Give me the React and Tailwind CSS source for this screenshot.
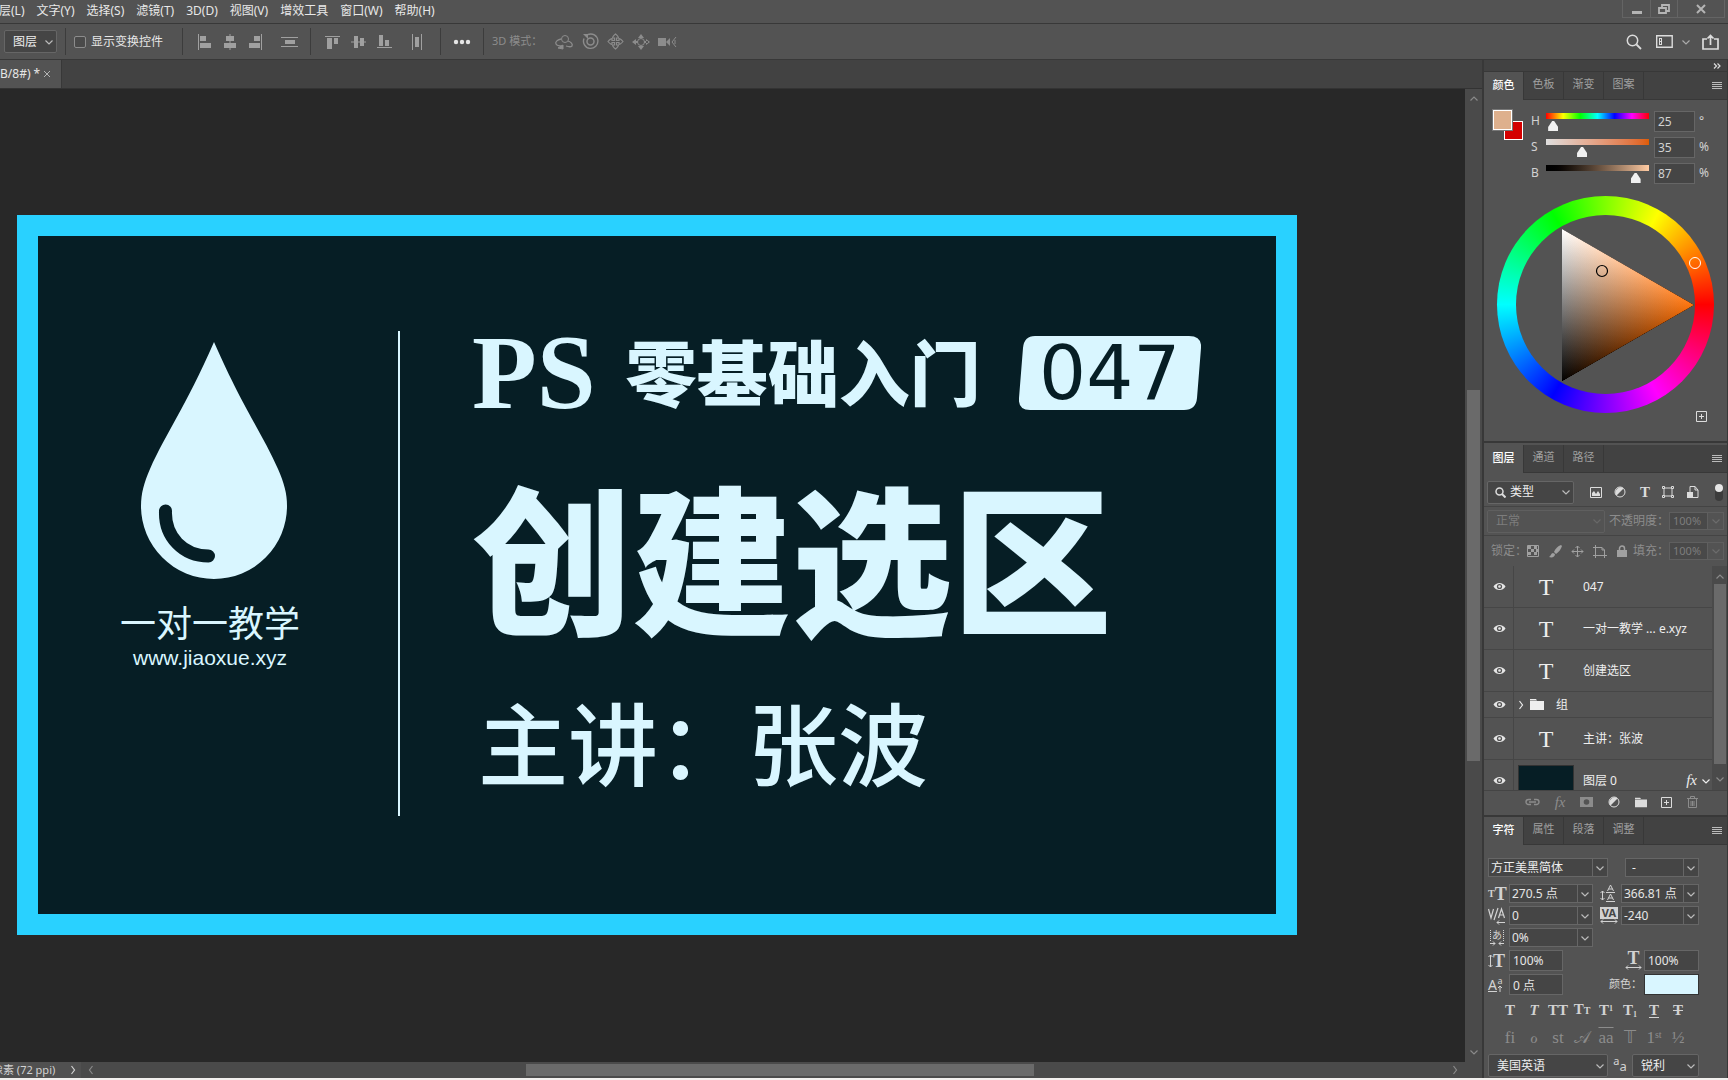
import React, { useState } from 'react';

const menus = ['图层(L)', '文字(Y)', '选择(S)', '滤镜(T)', '3D(D)', '视图(V)', '增效工具', '窗口(W)', '帮助(H)'];

const layers = [
  { id: 1, kind: 'text', name: '047' },
  { id: 2, kind: 'text', name: '一对一教学 ... e.xyz' },
  { id: 3, kind: 'text', name: '创建选区' },
  { id: 4, kind: 'group', name: '组' },
  { id: 5, kind: 'text', name: '主讲：张波' },
  { id: 6, kind: 'pixel', name: '图层 0' },
];

function Icon({ w = 16, h = 16, className = '', children }) {
  return (
    <svg
      width={w}
      height={h}
      viewBox={`0 0 ${w} ${h}`}
      fill="none"
      stroke="currentColor"
      className={`block shrink-0 ${className}`}
      aria-hidden="true"
    >
      {children}
    </svg>
  );
}

function Chevron({ dir = 'down', className = '' }) {
  const paths = {
    down: 'M1.5 3.5L5 7l3.5-3.5',
    up: 'M1.5 6.5L5 3l3.5 3.5',
    left: 'M6.5 1l-3 4 3 4',
    right: 'M3.5 1l3 4-3 4',
  };
  return (
    <Icon w={10} h={10} className={className}>
      <path d={paths[dir]} strokeWidth="1.2" />
    </Icon>
  );
}

function IconButton({ label, className = '', children }) {
  return (
    <button type="button" aria-label={label} title={label} className={`flex shrink-0 items-center justify-center ${className}`}>
      {children}
    </button>
  );
}

function Select({ label, value, className = '', inner = '', split = false, dim = false }) {
  return (
    <div className={`relative flex shrink-0 border ${dim ? 'border-[#5f5f5f] text-[#7d7d7d]' : 'border-[#666] bg-[#454545] text-[#eee]'} ${className}`}>
      <select aria-label={label} className={`w-full appearance-none bg-transparent outline-none ${inner}`}>
        <option>{value}</option>
      </select>
      <span className={`pointer-events-none absolute inset-y-0 right-0 flex w-[15px] items-center justify-center ${split ? 'border-l border-[#666]' : ''} ${dim ? 'text-[#686868]' : 'text-[#bbb]'}`}>
        <Chevron />
      </span>
    </div>
  );
}

function ComboField({ label, value, className = '' }) {
  return (
    <div className={`flex h-[19px] shrink-0 border border-[#666] bg-[#454545] ${className}`}>
      <input aria-label={label} defaultValue={value} className="w-full min-w-0 bg-transparent pl-[2px] text-xs text-[#e6e6e6] outline-none" />
      <button type="button" aria-label={`${label}选项`} className="flex w-[15px] shrink-0 items-center justify-center border-l border-[#666] text-[#bbb]">
        <Chevron />
      </button>
    </div>
  );
}

function PanelTabs({ tabs }) {
  const [active, setActive] = useState(tabs[0]);
  return (
    <div className="flex h-[28px] shrink-0 bg-[#424242] text-[11px]">
      {tabs.map((tab) => (
        <button
          key={tab}
          type="button"
          onClick={() => setActive(tab)}
          className={`w-[40px] border-r border-[#383838] pb-[2px] ${active === tab ? 'bg-[#535353] font-medium text-white' : 'border-b text-[#a0a0a0]'}`}
        >
          {tab}
        </button>
      ))}
      <div className="flex flex-1 items-center justify-end border-b border-[#383838] pr-[5px] text-[#bbb]">
        <IconButton label="面板菜单">
          <Icon w={10} h={8}>
            <path d="M0 .5h10M0 2.5h10M0 4.5h10M0 6.5h10" />
          </Icon>
        </IconButton>
      </div>
    </div>
  );
}

/* ---------- top bars ---------- */

function MenuBar() {
  return (
    <header className="flex h-[24px] shrink-0 justify-between overflow-hidden border-b border-[#383838] bg-[#535353] text-[#e8e8e8]">
      <nav className="-ml-[13px] flex items-center gap-[12px] pb-[2px] text-xs">
        {menus.map((m) => (
          <button key={m} type="button" className="whitespace-nowrap">
            {m}
          </button>
        ))}
      </nav>
      <div className="mr-[3px] flex h-[18px] border border-t-0 border-[#646464] text-[#b4b4b4]">
        <IconButton label="最小化" className="w-[28px] border-r border-[#646464]">
          <Icon w={10} h={12}>
            <path d="M0 9.500h10" strokeWidth="3" />
          </Icon>
        </IconButton>
        <IconButton label="还原" className="w-[27px] border-r border-[#646464]">
          <Icon w={12} h={12}>
            <path d="M4 4V2h7v6H8M1 5h7v5H1z" strokeWidth="1.8" />
          </Icon>
        </IconButton>
        <IconButton label="关闭" className="w-[46px]">
          <Icon w={10} h={10}>
            <path d="M1 1l8 8M9 1L1 9" strokeWidth="2" />
          </Icon>
        </IconButton>
      </div>
    </header>
  );
}

function Rule() {
  return <div className="h-[27px] w-px shrink-0 bg-[#3c3c3c]" />;
}

function OptionsBar() {
  return (
    <div className="flex h-[36px] shrink-0 items-center border-b border-[#383838] bg-[#535353] text-[#a0a0a0]">
      <Select label="自动选择" value="图层" className="ml-[4px] h-[23px] w-[53px] rounded-[2px] text-xs" inner="pl-[8px]" />
      <div className="w-[8px]" />
      <Rule />
      <label className="ml-[8px] flex w-[108px] items-center gap-[5px] text-xs text-[#e6e6e6]">
        <input type="checkbox" className="h-[12px] w-[12px] appearance-none rounded-[2px] border border-[#8c8c8c] bg-[#4a4a4a]" />
        显示变换控件
      </label>
      <Rule />
      <div className="ml-[14px] mr-[12px] flex items-center">
        <IconButton label="左对齐" className="mr-[11px]">
          <Icon w={15} h={16}>
            <path d="M1.5 0v16" />
            <path d="M3 2h6v5H3zM3 9h11v5H3z" fill="currentColor" stroke="none" />
          </Icon>
        </IconButton>
        <IconButton label="水平居中对齐" className="mr-[11px]">
          <Icon w={14} h={16}>
            <path d="M7 0v16" />
            <path d="M3 2h8v5H3zM1 9h12v5H1z" fill="currentColor" stroke="none" />
          </Icon>
        </IconButton>
        <IconButton label="右对齐" className="mr-[18px]">
          <Icon w={15} h={16}>
            <path d="M13.5 0v16" />
            <path d="M6 2h6v5H6zM1 9h11v5H1z" fill="currentColor" stroke="none" />
          </Icon>
        </IconButton>
        <IconButton label="垂直分布">
          <Icon w={17} h={16}>
            <path d="M0 3.500h17M0 12.500h17" />
            <path d="M4 6h10v4H4z" fill="currentColor" stroke="none" />
          </Icon>
        </IconButton>
      </div>
      <Rule />
      <div className="ml-[14px] mr-[16px] flex items-center">
        <IconButton label="顶对齐" className="mr-[11px]">
          <Icon w={15} h={16}>
            <path d="M0 2.500h15" />
            <path d="M2 4h5v11H2zM9 4h4v6H9z" fill="currentColor" stroke="none" />
          </Icon>
        </IconButton>
        <IconButton label="垂直居中对齐" className="mr-[11px]">
          <Icon w={15} h={16}>
            <path d="M0 8h15" />
            <path d="M3 2h4v12H3zM9 4h4v8H9z" fill="currentColor" stroke="none" />
          </Icon>
        </IconButton>
        <IconButton label="底对齐" className="mr-[19px]">
          <Icon w={15} h={16}>
            <path d="M0 13.500h15" />
            <path d="M2 1h4v11H2zM8 6h4v6H8z" fill="currentColor" stroke="none" />
          </Icon>
        </IconButton>
        <IconButton label="水平分布">
          <Icon w={13} h={16}>
            <path d="M1.5 0v16M10.5 0v16" />
            <path d="M4 3h4v10H4z" fill="currentColor" stroke="none" />
          </Icon>
        </IconButton>
      </div>
      <Rule />
      <IconButton label="更多选项" className="ml-[12px] mr-[12px] text-[#e6e6e6]">
        <Icon w={18} h={6}>
          <g fill="currentColor" stroke="none">
            <circle cx="3" cy="3" r="2.2" />
            <circle cx="9" cy="3" r="2.2" />
            <circle cx="15" cy="3" r="2.2" />
          </g>
        </Icon>
      </IconButton>
      <Rule />
      <span className="ml-[8px] w-[62px] whitespace-nowrap text-[11px] text-[#8c8c8c]">3D 模式：</span>
      <div className="flex items-center gap-[8px] text-[#8c8c8c]">
        <IconButton label="环绕移动 3D 相机">
          <Icon w={20} h={16}>
            <circle cx="11" cy="5" r="3.5" />
            <path d="M7 5C3 6 1 8 2 10s3 2 6 2M14 7c3 1 5 3 4 5-1 1-3 1-6 0" strokeWidth="1.3" />
            <path d="M4 14l5-3v4z" fill="currentColor" strokeWidth="1" />
          </Icon>
        </IconButton>
        <IconButton label="滚动 3D 相机">
          <Icon w={17} h={17}>
            <circle cx="8.5" cy="8.5" r="3.5" strokeWidth="1.5" />
            <path d="M6 1.500a7.200 7.200 0 1 1-4 4" strokeWidth="1.400" />
            <path d="M1 1h5v5z" fill="currentColor" stroke="none" />
          </Icon>
        </IconButton>
        <IconButton label="平移 3D 相机">
          <Icon w={17} h={17}>
            <path d="M7.500 7.500V5H6c-1 0 0-2 2.500-4C11 3 12 5 11 5H9.500v2.500H12V6c0-1 2 0 4 2.500-2 2.500-4 3.500-4 2.500V9.500H9.500V12H11c1 0 0 2-2.500 4C6 14 5 12 6 12h1.500V9.500H5V11c0 1-2 0-4-2.500C3 6 5 5 5 6v1.500z" strokeWidth="1.2" />
          </Icon>
        </IconButton>
        <IconButton label="滑动 3D 相机">
          <Icon w={18} h={16}>
            <circle cx="9" cy="8" r="3.5" />
            <path d="M9 0l3 4H6zM9 16l3-4H6zM0 8l4-3v6zM18 8l-4-3v6zM2 7h4v2H2zM12 7h4v2h-4z" fill="currentColor" stroke="none" />
          </Icon>
        </IconButton>
        <IconButton label="变焦 3D 相机">
          <Icon w={19} h={14}>
            <path d="M0 3h8v8H0zM8 7l4-4v8z" fill="currentColor" stroke="none" />
            <path d="M18 2l-4 5 4 5M17 5v4" />
          </Icon>
        </IconButton>
      </div>
      <div className="ml-auto mr-[9px] flex items-center text-[#dcdcdc]">
        <IconButton label="搜索" className="mr-[14px]">
          <Icon w={16} h={16}>
            <circle cx="6.5" cy="6.5" r="5.2" strokeWidth="1.5" />
            <path d="M10.5 10.5L15 15" strokeWidth="1.8" />
          </Icon>
        </IconButton>
        <IconButton label="工作区" className="mr-[8px]">
          <Icon w={17} h={13}>
            <path d="M.7.7h15.500v11.600H.7z" strokeWidth="1.4" />
            <path d="M3.500 3v7M5.500 3v7M3 3.500h3M3 6.500h3M3 9.500h3" />
          </Icon>
        </IconButton>
        <Chevron className="mr-[11px] text-[#aaa]" />
        <IconButton label="共享">
          <Icon w={17} h={16}>
            <path d="M5 5H1v10h15V5h-4M8.500 11V1.500M5.500 4.500l3-3 3 3" strokeWidth="1.7" />
          </Icon>
        </IconButton>
      </div>
    </div>
  );
}

/* ---------- document ---------- */

function Artwork() {
  return (
    <div className="flex h-[720px] w-[1280px] shrink-0 border-[21px] border-[#29d1ff] bg-[#061e25] text-[#d9f6ff]">
      <div className="flex w-[360px] shrink-0 flex-col items-center pt-[106px] pr-[8px]">
        <svg width="146" height="238" viewBox="0 0 146 238" className="block" aria-hidden="true">
          <path d="M73 0C102 66 121 91 137 127c6 14 9 24 9 37a73 73 0 0 1-146 0c0-13 3-23 9-37C25 91 44 66 73 0z" fill="currentColor" />
          <path d="M24.500 169c-1 26 18 45 43 45" fill="none" stroke="#061e25" strokeWidth="13" strokeLinecap="round" />
        </svg>
        <p className="mt-[22px] pr-[8px] text-[36px] leading-[44px]">一对一教学</p>
        <p className="pr-[8px] font-['Liberation_Sans',sans-serif] text-[21px] leading-[24px]">www.jiaoxue.xyz</p>
      </div>
      <div className="mt-[95px] h-[485px] w-[2px] shrink-0 bg-[#d9f6ff]" />
      <div className="flex flex-col pt-[95px] pl-[72px]">
        <div className="flex h-[84px] items-center">
          <span className="mr-[30px] font-['Liberation_Serif',serif] text-[106px] leading-[84px] font-bold">PS</span>
          <span className="text-[71px] leading-[84px] font-black">零基础入门</span>
          <span className="relative ml-[38px] flex h-[74px] w-[182px] items-center justify-center">
            <svg className="absolute inset-0" width="182" height="74" viewBox="0 0 182 74" aria-hidden="true">
              <path d="M16 0h154q13 0 12 12l-4 50q-1 12-13 12H11Q-1 74 0 62L4 12Q5 0 16 0z" fill="currentColor" />
            </svg>
            <span className="relative font-['DejaVu_Sans',sans-serif] text-[74px] leading-[74px] text-[#061e25]">047</span>
          </span>
        </div>
        <h1 className="mt-[36px] text-[160px] leading-[220px] font-black">创建选区</h1>
        <h2 className="mt-[18px] pl-[6px] text-[90px] leading-[110px] font-medium">主讲：张波</h2>
      </div>
    </div>
  );
}

function Document() {
  return (
    <main className="flex min-w-0 flex-1 flex-col">
      <div className="flex h-[29px] shrink-0 border-b border-[#333] bg-[#424242]">
        <div className="flex w-[62px] items-center border-r border-[#383838] bg-[#535353] text-xs text-[#e6e6e6]">
          <span className="w-[43px] whitespace-nowrap">B/8#) *</span>
          <IconButton label="关闭文档" className="text-[#b4b4b4]">
            <Icon w={8} h={8}>
              <path d="M1 1l6 6M7 1L1 7" />
            </Icon>
          </IconButton>
        </div>
      </div>
      <div className="flex min-h-0 flex-1">
        <div className="min-w-0 flex-1 overflow-hidden bg-[#282828] pt-[126px] pl-[17px]">
          <Artwork />
        </div>
        <div className="flex w-[17px] shrink-0 flex-col items-center bg-[#4a4a4a] py-[5px] text-[#8a8a8a]">
          <Chevron dir="up" />
          <div className="mt-[286px] h-[371px] w-[13px] bg-[#6a6a6a]" />
          <Chevron className="mt-auto" />
        </div>
      </div>
      <footer className="flex h-[16px] shrink-0 items-center bg-[#4a4a4a] text-[11px] text-[#d2d2d2]">
        <div className="flex h-full w-[81px] items-center overflow-hidden bg-[#505050]">
          <span className="-ml-[8px] w-[76px] whitespace-nowrap">像素 (72 ppi)</span>
          <Chevron dir="right" />
        </div>
        <Chevron dir="left" className="ml-[5px] text-[#8a8a8a]" />
        <div className="flex h-full flex-1 items-center pl-[29%]">
          <div className="h-[12px] w-[55%] bg-[#6a6a6a]" />
        </div>
        <Chevron dir="right" className="mr-[22px] text-[#8a8a8a]" />
      </footer>
    </main>
  );
}

/* ---------- colour panel ---------- */

function Slider({ name, value, max, unit, track }) {
  const id = `slider-${name}`;
  return (
    <div className="flex h-[26px] items-center text-xs text-[#d2d2d2]">
      <label htmlFor={id} className="w-[15px]">
        {name}
      </label>
      <div className="mr-[5px] flex min-w-0 flex-1 flex-col pt-[2px]">
        <div className={`h-[6px] ${track}`} />
        <input
          id={id}
          type="range"
          max={max}
          defaultValue={value}
          className="-mx-[5px] mt-[2px] block h-[10px] appearance-none bg-transparent [&::-webkit-slider-thumb]:h-[10px] [&::-webkit-slider-thumb]:w-[10px] [&::-webkit-slider-thumb]:appearance-none [&::-webkit-slider-thumb]:bg-[#f0f0f0] [&::-webkit-slider-thumb]:[clip-path:polygon(40%_0,60%_0,100%_60%,100%_100%,0_100%,0_60%)]"
        />
      </div>
      <input aria-label={`${name} 值`} defaultValue={value} className="h-[21px] w-[41px] border border-[#666] bg-[#454545] pl-[3px] outline-none" />
      <span className="w-[32px] pl-[4px]">{unit}</span>
    </div>
  );
}

function ColorWheel() {
  return (
    <div className="relative mx-auto mt-[10px] h-[217px] w-[217px]">
      <div className="h-full w-full rounded-full bg-[conic-gradient(from_90deg,#f00,#f0f,#00f,#0ff,#0f0,#ff0,#f00)] p-[19px]">
        <div className="h-full w-full rounded-full bg-[#535353]">
          <svg className="block h-full w-full" viewBox="19 19 179 179" aria-hidden="true">
            <defs>
              <linearGradient id="hue" gradientUnits="userSpaceOnUse" x1="65" y1="0" x2="197" y2="0">
                <stop offset="0" stopColor="#000" />
                <stop offset="1" stopColor="#ff740c" />
              </linearGradient>
              <linearGradient id="tint" gradientUnits="userSpaceOnUse" x1="65" y1="33" x2="131" y2="147">
                <stop offset="0" stopColor="#fff" />
                <stop offset="1" stopColor="#000" />
              </linearGradient>
            </defs>
            <g className="isolate">
              <path d="M65 33l132 76L65 185z" fill="url(#hue)" />
              <path d="M65 33l132 76L65 185z" fill="url(#tint)" className="mix-blend-plus-lighter" />
            </g>
            <circle cx="105" cy="75" r="5.5" fill="none" stroke="#000" strokeWidth="1.2" />
          </svg>
        </div>
      </div>
      <span className="absolute top-[61px] left-[192px] h-[12px] w-[12px] rounded-full border border-white" />
    </div>
  );
}

function ColorPanel() {
  return (
    <section className="flex h-[371px] shrink-0 flex-col border-b-2 border-[#383838]">
      <PanelTabs tabs={['颜色', '色板', '渐变', '图案']} />
      <div className="flex pt-[8px] pl-[9px]">
        <div className="grid h-[32px] w-[38px] shrink-0 grid-cols-[11px_8px_11px] grid-rows-[11px_9px_10px] pt-[2px]">
          <button type="button" aria-label="背景色" className="col-span-2 col-start-2 row-span-2 row-start-2 border border-white bg-[#d40000]" />
          <button type="button" aria-label="前景色" className="col-span-2 col-start-1 row-span-2 row-start-1 border border-white bg-[#deb08d] outline outline-[#777]" />
        </div>
        <div className="min-w-0 flex-1">
          <Slider name="H" value={25} max={360} unit="°" track="bg-[linear-gradient(to_right,#f00,#ff0,#0f0,#0ff,#00f,#f0f,#f00)]" />
          <Slider name="S" value={35} max={100} unit="%" track="bg-linear-to-r from-[#dedede] to-[#de5c00]" />
          <Slider name="B" value={87} max={100} unit="%" track="bg-linear-to-r from-black to-[#ffcba3]" />
        </div>
      </div>
      <ColorWheel />
      <IconButton label="新建色板" className="-mt-[2px] mr-[20px] self-end text-[#dcdcdc]">
        <Icon w={11} h={11}>
          <path d="M.5.5h10v10H.5zM5.500 3v5M3 5.500h5" />
        </Icon>
      </IconButton>
    </section>
  );
}

/* ---------- layers panel ---------- */

function HalfCircle({ className = '' }) {
  return (
    <Icon w={12} h={12} className={className}>
      <circle cx="6" cy="6" r="5" />
      <path d="M9.500 2.500A5 5 0 0 0 2.500 9.500z" fill="currentColor" stroke="none" />
    </Icon>
  );
}

function Folder({ w = 14 }) {
  return (
    <svg width={w} height="11" viewBox="0 0 14 11" fill="currentColor" className="block shrink-0" aria-hidden="true">
      <path d="M0 0h6l1 1.500H0zM0 2h14v9H0z" />
    </svg>
  );
}

function PercentField({ label }) {
  return (
    <div className="flex h-[18px] w-[55px] border border-[#5f5f5f] text-[11px] text-[#7d7d7d]">
      <input aria-label={label} disabled defaultValue="100%" className="w-[37px] bg-[#494949] pl-[3px]" />
      <span className="flex w-[16px] items-center justify-center border-l border-[#5f5f5f] text-[#6c6c6c]">
        <Chevron />
      </span>
    </div>
  );
}

function LayerRow({ layer }) {
  const heights = { text: 'h-[42px]', group: 'h-[26px]', pixel: 'h-[42px]' };
  return (
    <li className={`flex shrink-0 items-stretch border-b border-[#464646] text-[#eee] ${heights[layer.kind]}`}>
      <IconButton label="显示图层" className="w-[30px] border-r border-[#464646] pl-[2px]">
        <Icon w={13} h={9}>
          <path d="M.5 4.500C3-.3 10-.3 12.500 4.500 10 9.300 3 9.300.5 4.500z" fill="#e6e6e6" stroke="none" />
          <circle cx="6.5" cy="4.5" r="2.6" fill="#535353" stroke="none" />
          <circle cx="6.5" cy="4.5" r="1.3" fill="#e6e6e6" stroke="none" />
        </Icon>
      </IconButton>
      {layer.kind === 'text' && (
        <span className="flex w-[69px] items-center justify-center pr-[5px] font-['Liberation_Serif',serif] text-[24px]">T</span>
      )}
      {layer.kind === 'group' && (
        <span className="flex w-[42px] items-center gap-[4px] pl-[2px]">
          <Chevron dir="right" />
          <Folder />
        </span>
      )}
      {layer.kind === 'pixel' && (
        <span className="flex w-[69px] items-center pl-[4px]">
          <span className="h-[31px] w-[56px] border border-[#333] bg-[#061e25]" />
        </span>
      )}
      <span className="flex items-center text-xs whitespace-nowrap">{layer.name}</span>
      {layer.kind === 'pixel' && (
        <span className="ml-auto flex items-center gap-[4px] pr-[1px]">
          <i className="font-['Liberation_Serif',serif] text-[15px]">fx</i>
          <Chevron />
        </span>
      )}
    </li>
  );
}

function LayersPanel() {
  return (
    <section className="mt-[2px] flex h-[372px] shrink-0 flex-col border-b-2 border-[#383838]">
      <PanelTabs tabs={['图层', '通道', '路径']} />
      <div className="flex h-[34px] shrink-0 items-center border-b border-[#444] pt-[5px] pl-[3px] text-[#dcdcdc]">
        <div className="relative">
          <Select label="筛选类型" value="类型" className="h-[23px] w-[87px] rounded-[2px] text-xs" inner="pl-[22px]" />
          <Icon w={11} h={11} className="pointer-events-none absolute top-[6px] left-[8px]">
            <circle cx="4.5" cy="4.5" r="3.5" strokeWidth="1.5" />
            <path d="M7 7l3.500 3.500" strokeWidth="2" />
          </Icon>
        </div>
        <IconButton label="像素图层滤镜" className="ml-[16px]">
          <Icon w={12} h={11}>
            <path d="M.5.5h11v10H.5z" />
            <path d="M2 9V6l2-2 2 3 2-3 2 3v2z" fill="currentColor" stroke="none" />
          </Icon>
        </IconButton>
        <IconButton label="调整图层滤镜" className="ml-[12px]">
          <HalfCircle />
        </IconButton>
        <IconButton label="文字图层滤镜" className="ml-[10px] w-[18px] font-['Liberation_Serif',serif] text-[15px] leading-4 font-bold">
          T
        </IconButton>
        <IconButton label="形状图层滤镜" className="ml-[8px]">
          <Icon w={12} h={12}>
            <path d="M2 2h8v8H2z" />
            <path d="M.5.5h2v2h-2zM9.500.5h2v2h-2zM.5 9.500h2v2h-2zM9.500 9.500h2v2h-2z" fill="#535353" />
          </Icon>
        </IconButton>
        <IconButton label="智能对象滤镜" className="ml-[13px]">
          <Icon w={12} h={12}>
            <path d="M3 6V.5h5L11 4v7.500H6M8 .5V4h3" />
            <path d="M0 6h6v6H0z" fill="currentColor" stroke="none" />
          </Icon>
        </IconButton>
        <button type="button" aria-label="打开图层滤镜" className="mr-[4px] ml-auto flex h-[17px] w-[8px] rounded-full bg-[#3c3c3c]">
          <span className="h-[8px] w-[8px] rounded-full bg-[#e6e6e6]" />
        </button>
      </div>
      <div className="flex h-[29px] shrink-0 items-center border-b border-[#444] pl-[3px] text-xs text-[#8c8c8c]">
        <Select dim label="混合模式" value="正常" className="h-[23px] w-[118px] rounded-[2px]" inner="pl-[8px]" />
        <span className="ml-auto whitespace-nowrap">不透明度：</span>
        <div className="mr-[3px]">
          <PercentField label="不透明度" />
        </div>
      </div>
      <div className="flex h-[30px] shrink-0 items-center pl-[7px] text-xs text-[#a0a0a0]">
        <span className="w-[36px] text-[#8c8c8c]">锁定：</span>
        <IconButton label="锁定透明像素">
          <Icon w={12} h={12}>
            <path d="M.5.5h11v11H.5z" />
            <path d="M1 1h3v3H1zM7 1h3v3H7zM4 4h3v3H4zM9 4h3v3H9zM1 7h3v3H1zM7 7h3v3H7z" fill="currentColor" stroke="none" />
          </Icon>
        </IconButton>
        <IconButton label="锁定图像像素" className="ml-[10px]">
          <Icon w={13} h={13}>
            <path d="M12 0C9 1 6 4 5 7l2 2c3-2 5-5 6-8zM4 8c-2 0-2 3-4 4 3 1 6 0 6-3z" fill="currentColor" stroke="none" />
          </Icon>
        </IconButton>
        <IconButton label="锁定位置" className="ml-[9px]">
          <Icon w={13} h={13}>
            <path d="M6.500 1v11M1 6.500h11M4.500 3l2-2 2 2M4.500 10l2 2 2-2M3 4.500l-2 2 2 2M10 4.500l2 2-2 2" />
          </Icon>
        </IconButton>
        <IconButton label="防止在画板内外自动嵌套" className="ml-[9px]">
          <Icon w={14} h={13}>
            <path d="M2.500 0v13M0 2.500h9M0 10.500h14M11.500 5v8M9 2.500l2.500 2.500H9z" />
          </Icon>
        </IconButton>
        <IconButton label="全部锁定" className="ml-[10px]">
          <Icon w={10} h={12}>
            <path d="M2.500 5V3.500a2.500 2.500 0 0 1 5 0V5" strokeWidth="1.5" />
            <path d="M0 5h10v7H0z" fill="currentColor" stroke="none" />
          </Icon>
        </IconButton>
        <span className="ml-auto whitespace-nowrap text-[#8c8c8c]">填充：</span>
        <div className="mr-[3px]">
          <PercentField label="填充" />
        </div>
      </div>
      <div className="flex min-h-0 flex-1 overflow-hidden">
        <ul className="flex min-w-0 flex-1 flex-col overflow-hidden">
          {layers.map((layer) => (
            <LayerRow key={layer.id} layer={layer} />
          ))}
        </ul>
        <div className="flex w-[15px] shrink-0 flex-col items-center bg-[#4a4a4a] py-[6px] text-[#8a8a8a]">
          <Chevron dir="up" />
          <div className="mt-[2px] h-[180px] w-[12px] bg-[#6a6a6a]" />
          <Chevron className="mt-auto" />
        </div>
      </div>
      <div className="flex h-[25px] shrink-0 items-center justify-between border-t border-[#444] pr-[29px] pb-[2px] pl-[41px] text-[#dcdcdc]">
        <IconButton label="链接图层" className="text-[#8c8c8c]">
          <Icon w={15} h={8}>
            <path d="M6 1.500H3.500a2.500 2.500 0 0 0 0 5H6M9 1.500h2.500a2.500 2.500 0 0 1 0 5H9M4 4h7" strokeWidth="1.4" />
          </Icon>
        </IconButton>
        <IconButton label="添加图层样式" className="font-['Liberation_Serif',serif] text-[15px] leading-4 text-[#8c8c8c] italic">
          fx
        </IconButton>
        <IconButton label="添加图层蒙版" className="text-[#8c8c8c]">
          <Icon w={13} h={10}>
            <path d="M0 0h13v10H0z" fill="currentColor" stroke="none" />
            <circle cx="6.5" cy="5" r="2.8" fill="#535353" stroke="none" />
          </Icon>
        </IconButton>
        <IconButton label="创建调整图层">
          <HalfCircle />
        </IconButton>
        <IconButton label="创建新组">
          <Folder w={12} />
        </IconButton>
        <IconButton label="创建新图层">
          <Icon w={11} h={11}>
            <path d="M.5.5h10v10H.5zM5.500 3v5M3 5.500h5" />
          </Icon>
        </IconButton>
        <IconButton label="删除图层" className="text-[#8c8c8c]">
          <Icon w={11} h={12}>
            <path d="M0 2.500h11M3.500 2V.5h4V2M1.500 3v8.500h8V3M4 5v5M5.500 5v5M7 5v5" />
          </Icon>
        </IconButton>
      </div>
    </section>
  );
}

/* ---------- character panel ---------- */

function CharIcon({ children }) {
  return <span className="flex w-[21px] shrink-0 items-center text-[#d2d2d2]">{children}</span>;
}

const styleButtons = [
  { label: '仿粗体', body: 'T', cls: 'font-black' },
  { label: '仿斜体', body: 'T', cls: 'italic' },
  { label: '全部大写字母', body: 'TT', cls: '' },
  { label: '小型大写字母', body: <>T<small className="text-[10px]">T</small></>, cls: '' },
  { label: '上标', body: <>T<sup className="text-[8px]">1</sup></>, cls: '' },
  { label: '下标', body: <>T<sub className="text-[8px]">1</sub></>, cls: '' },
  { label: '下划线', body: 'T', cls: 'underline underline-offset-2' },
  { label: '删除线', body: 'T', cls: 'line-through' },
];

const featureButtons = [
  { label: '标准连字', body: 'fi', cls: '' },
  { label: '上下文替代字', body: 'ℴ', cls: 'italic' },
  { label: '自由连字', body: 'st', cls: '' },
  { label: '花饰字', body: '𝒜', cls: '' },
  { label: '文体替代字', body: 'aa', cls: 'overline' },
  { label: '标题替代字', body: '𝕋', cls: 'italic' },
  { label: '序数字', body: <>1<sup className="text-[10px]">st</sup></>, cls: '' },
  { label: '分数字', body: '½', cls: '' },
];

function CharacterPanel() {
  return (
    <section className="flex min-h-0 flex-1 flex-col overflow-hidden">
      <PanelTabs tabs={['字符', '属性', '段落', '调整']} />
      <div className="flex flex-col pt-[13px] pr-[28px] pl-[4px] text-xs">
        <div className="flex justify-between">
          <Select split label="字体" value="方正美黑简体" className="h-[19px] w-[120px]" inner="pl-[2px]" />
          <Select split label="字体样式" value="-" className="h-[19px] w-[74px]" inner="pl-[6px]" />
        </div>
        <div className="mt-[7px] flex items-center">
          <CharIcon>
            <span className="font-['Liberation_Serif',serif] text-[10px] leading-4 font-bold">T</span>
            <span className="font-['Liberation_Serif',serif] text-[18px] leading-4 font-bold">T</span>
          </CharIcon>
          <ComboField label="字体大小" value="270.5 点" className="w-[84px]" />
          <span className="ml-auto">
            <CharIcon>
              <Icon w={15} h={17}>
                <path d="M2.500 6v9M.5 8l2-2 2 2M.5 13l2 2 2-2M6 7.500h9M6 16.500h9M7.500 6l3-6 3 6M8.500 4h4M7.500 15l3-6 3 6M8.500 13h4" />
              </Icon>
            </CharIcon>
          </span>
          <ComboField label="行距" value="366.81 点" className="w-[78px]" />
        </div>
        <div className="mt-[3px] flex items-center">
          <CharIcon>
            <Icon w={17} h={18}>
              <path d="M.5 2l2.500 9 2.500-9M10 1L6 13M10.500 11l3-9 3 9M11.500 8h4" strokeWidth="1.2" />
              <path d="M9 15.500h8M11 13.500l-2 2 2 2" />
            </Icon>
          </CharIcon>
          <ComboField label="字距微调" value="0" className="w-[84px]" />
          <span className="ml-auto">
            <CharIcon>
              <span className="flex w-[18px] flex-col">
                <span className="bg-[#d2d2d2] text-center text-[11px] leading-[12px] font-bold text-[#454545]">VA</span>
                <Icon w={18} h={5}>
                  <path d="M1 2.500h16M3 .5l-2 2 2 2M15 .5l2 2-2 2" />
                </Icon>
              </span>
            </CharIcon>
          </span>
          <ComboField label="字距调整" value="-240" className="w-[78px]" />
        </div>
        <div className="mt-[3px] flex items-center">
          <CharIcon>
            <span className="ml-[2px] flex w-[14px] flex-col items-center">
              <span className="border-x border-dotted border-[#d2d2d2] px-px text-[10px] leading-[11px]">あ</span>
              <Icon w={14} h={5}>
                <path d="M0 2.500h5M3 .5l2 2-2 2M14 2.500H9M11 .5l-2 2 2 2" />
              </Icon>
            </span>
          </CharIcon>
          <ComboField label="比例间距" value="0%" className="w-[84px]" />
        </div>
        <div className="mt-[3px] flex items-center">
          <CharIcon>
            <Icon w={5} h={14}>
              <path d="M2.500 1v12M.5 3l2-2 2 2M.5 11l2 2 2-2" />
            </Icon>
            <span className="font-['Liberation_Serif',serif] text-[18px] leading-4 font-bold">T</span>
          </CharIcon>
          <input aria-label="垂直缩放" defaultValue="100%" className="h-[21px] w-[54px] border border-[#666] bg-[#454545] pl-[3px] text-[#e6e6e6] outline-none" />
          <span className="mr-[2px] ml-auto flex w-[17px] flex-col items-center text-[#d2d2d2]">
            <span className="font-['Liberation_Serif',serif] text-[18px] leading-[13px] font-bold">T</span>
            <Icon w={17} h={5}>
              <path d="M1 2.500h15M3 .5l-2 2 2 2M14 .5l2 2-2 2" />
            </Icon>
          </span>
          <input aria-label="水平缩放" defaultValue="100%" className="h-[21px] w-[55px] border border-[#666] bg-[#454545] pl-[3px] text-[#e6e6e6] outline-none" />
        </div>
        <div className="mt-[3px] flex items-center">
          <CharIcon>
            <span className="text-[14px] leading-4 underline">A</span>
            <span className="flex flex-col items-center">
              <span className="text-[9px] leading-[8px]">a</span>
              <Icon w={6} h={7}>
                <path d="M3 7V1M1 3l2-2 2 2" />
              </Icon>
            </span>
          </CharIcon>
          <input aria-label="基线偏移" defaultValue="0 点" className="h-[21px] w-[54px] border border-[#666] bg-[#454545] pl-[3px] text-[#e6e6e6] outline-none" />
          <span className="ml-auto w-[35px] whitespace-nowrap text-[11px] text-[#d2d2d2]">颜色：</span>
          <button type="button" aria-label="文本颜色" className="h-[21px] w-[55px] border border-[#333] bg-[#d9f6ff]" />
        </div>
        <div className="mt-[3px] grid h-[24px] grid-cols-8 items-center pr-[9px] pl-[10px] font-['Liberation_Serif',serif] text-[15px] font-bold text-[#d2d2d2]">
          {styleButtons.map((b) => (
            <button key={b.label} type="button" title={b.label} className={`text-center leading-4 whitespace-nowrap ${b.cls}`}>
              {b.body}
            </button>
          ))}
        </div>
        <div className="mt-[4px] grid h-[24px] grid-cols-8 items-center pr-[9px] pl-[10px] font-['Liberation_Serif','DejaVu_Sans',serif] text-[17px] text-[#8c8c8c]">
          {featureButtons.map((b) => (
            <button key={b.label} type="button" title={b.label} className={`text-center leading-4 whitespace-nowrap ${b.cls}`}>
              {b.body}
            </button>
          ))}
        </div>
        <div className="mt-[4px] flex items-center justify-between">
          <Select label="语言" value="美国英语" className="h-[23px] w-[120px] rounded-[2px]" inner="pl-[8px]" />
          <span className="text-[13px] leading-4 text-[#d2d2d2]">
            <sup className="text-[11px]">a</sup>a
          </span>
          <Select label="消除锯齿" value="锐利" className="h-[23px] w-[67px] rounded-[2px]" inner="pl-[8px]" />
        </div>
      </div>
    </section>
  );
}

export default function App() {
  return (
    <div className="flex h-screen w-full flex-col overflow-hidden border-b-2 border-[#f2f0ee] bg-[#535353] font-['Noto_Sans','Noto_Sans_CJK_SC',sans-serif]">
      <MenuBar />
      <OptionsBar />
      <div className="flex min-h-0 flex-1">
        <Document />
        <aside className="flex w-[246px] shrink-0 flex-col border-r border-l-2 border-[#383838] bg-[#535353]">
          <div className="flex h-[12px] shrink-0 items-center justify-end border-b border-[#383838] bg-[#424242] pr-[6px] text-[#dcdcdc]">
            <IconButton label="折叠面板">
              <Icon w={8} h={6}>
                <path d="M1 .5L3.500 3 1 5.500M4.500.5L7 3 4.500 5.500" strokeWidth="1.2" />
              </Icon>
            </IconButton>
          </div>
          <ColorPanel />
          <LayersPanel />
          <CharacterPanel />
        </aside>
      </div>
    </div>
  );
}
